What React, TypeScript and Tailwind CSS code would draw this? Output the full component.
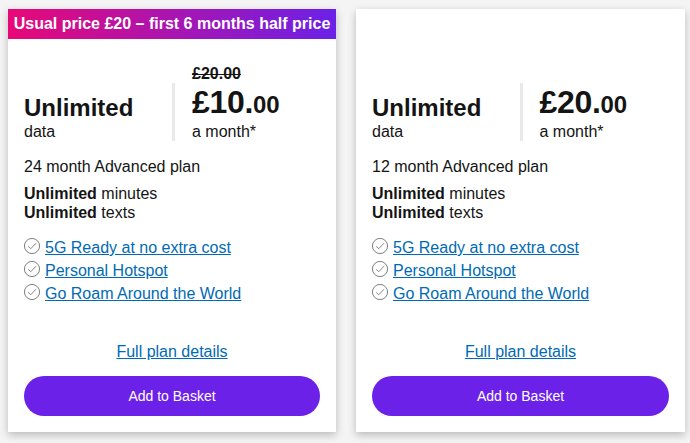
const features = ["5G Ready at no extra cost", "Personal Hotspot", "Go Roam Around the World"];

type Plan = { promo?: string; was?: string; price: string; months: number };

function Tick() {
  return (
    <svg className="mr-[5px] mt-0.5 h-4 w-4 shrink-0" viewBox="0 0 16 16" fill="none">
      <circle cx="8" cy="8" r="7.6" stroke="#555" strokeWidth="0.75" />
      <path d="M4.2 8.4 L6.8 10.7 L12 5.2" stroke="#777" strokeWidth="0.9" />
    </svg>
  );
}

function Card({ plan, className }: { plan: Plan; className: string }) {
  return (
    <section className={`h-[423px] shrink-0 bg-white shadow-[0_3px_8px_rgba(0,0,0,0.24)] ${className}`}>
      <div className={`h-[30px] whitespace-nowrap text-center text-base leading-[30px] font-bold text-white ${plan.promo ? "bg-[linear-gradient(90deg,#e80878,#6b21e8)]" : ""}`}>
        {plan.promo}
      </div>
      <div className="px-4">
        <div className="flex h-[102px] items-end">
          <div className="w-[148px]">
            <div className="text-2xl leading-7 font-bold">Unlimited</div>
            <div className="h-[19px] leading-[19px]">data</div>
          </div>
          <div className="h-[58px] w-[3px] bg-[#e9e9e9]" />
          <div className={plan.was ? "pl-[17px]" : "pl-[16.5px]"}>
            <div className="h-[17px] leading-[18px] font-bold line-through">{plan.was}</div>
            <div className="h-[40px] text-[32px] leading-[40px] font-bold tracking-[-0.3px]">
              {plan.price}.<span className="text-2xl tracking-[-0.3px]">00</span>
            </div>
            <div className="h-[19px] leading-[19px]">a month*</div>
          </div>
        </div>
        <p className="mt-4 leading-[19px]">{plan.months} month Advanced plan</p>
        <div className="mt-2 leading-[19px]">
          <p><b>Unlimited</b> minutes</p>
          <p><b>Unlimited</b> texts</p>
        </div>
        <ul className="mt-[14px]">
          {features.map((f) => (
            <li key={f} className="flex h-[23px] text-[#006bb4]">
              <Tick />
              <a className="leading-[23px] underline">{f}</a>
            </li>
          ))}
        </ul>
        <div className="mt-[37px] text-center leading-[19px] text-[#006bb4]">
          <a className="underline">Full plan details</a>
        </div>
        <button className="mt-[15px] h-10 w-full rounded-full bg-[#6c21e8] text-sm text-white">Add to Basket</button>
      </div>
    </section>
  );
}

export default function App() {
  return (
    <main className="flex h-[443px] w-[690px] gap-5 overflow-hidden bg-[#f4f4f4] pl-2 pt-[9px] font-['Liberation_Sans',Arial,sans-serif] text-base text-[#141414]">
      <Card className="w-[328px]" plan={{ promo: "Usual price £20 – first 6 months half price", was: "£20.00", price: "£10", months: 24 }} />
      <Card className="w-[329px]" plan={{ price: "£20", months: 12 }} />
    </main>
  );
}
